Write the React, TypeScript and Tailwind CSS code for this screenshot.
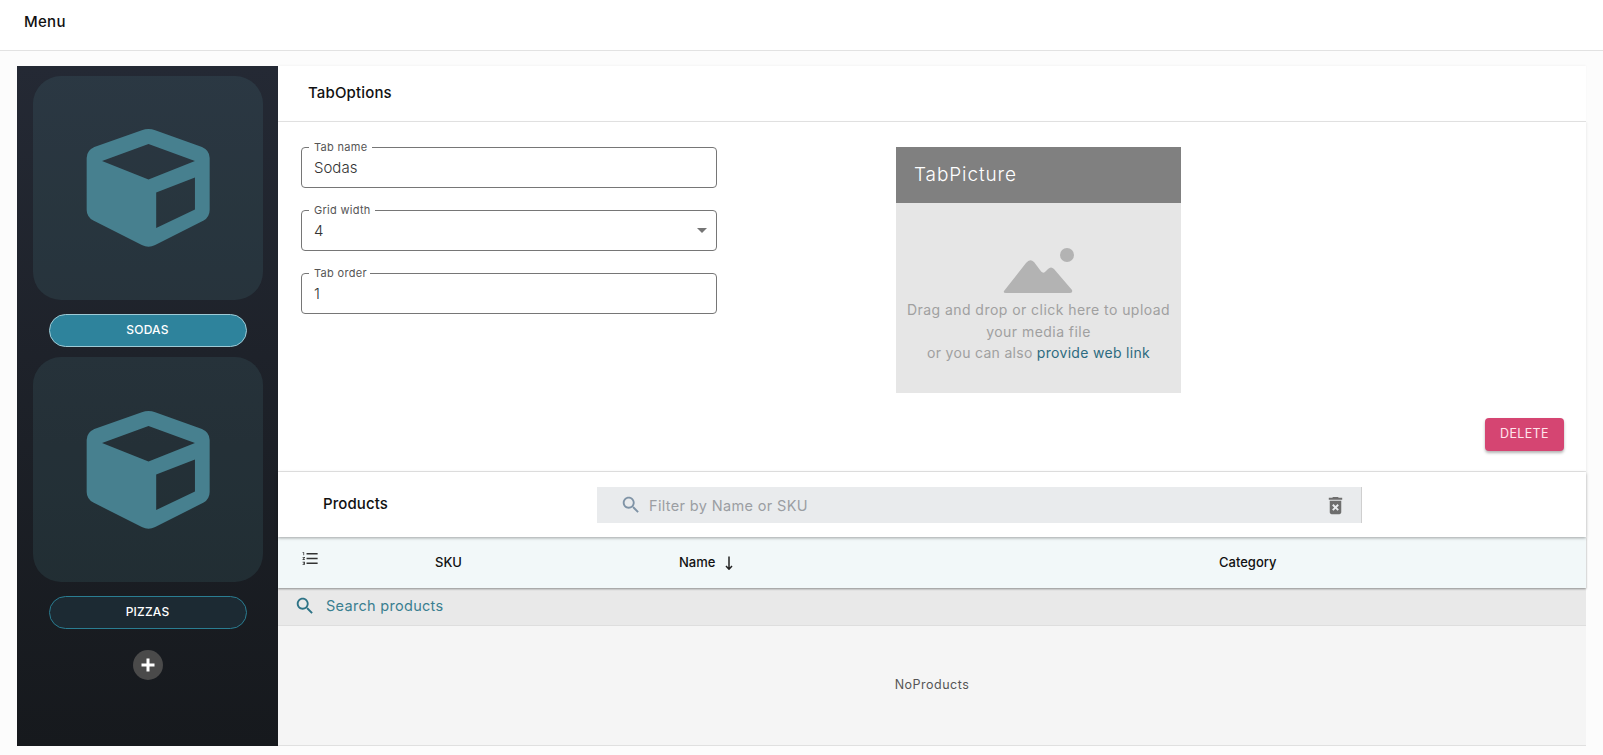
function Cube() {
  return (
    <svg viewBox="255 232 380 365" className="w-[127px] h-[122px]">
      <path
        fillRule="evenodd"
        fill="#47808f"
        d="M425 242 Q445 234 465 242 L605 292 Q628 302 628 325 L628 480 Q628 500 610 512 L465 585 Q445 595 425 585 L280 512 Q260 500 260 480 L260 325 Q260 302 283 292 Z M306 334 L445 389 L584 334 L445 283 Z M468 428 L468 534 L584 479 L584 383 Z"
      />
    </svg>
  );
}

function Tile({ heightClass }: { heightClass: string }) {
  return (
    <div className={`w-[230px] ${heightClass} rounded-[28px] bg-[#60a1ab]/[0.13] flex items-center justify-center pl-[2px]`}>
      <Cube />
    </div>
  );
}

function SearchIcon({ className }: { className: string }) {
  return (
    <svg viewBox="0 0 24 24" className={className} fill="currentColor">
      <path d="M15.5 14h-.79l-.28-.27C15.41 12.59 16 11.11 16 9.5 16 5.91 13.09 3 9.5 3S3 5.91 3 9.5 5.91 16 9.5 16c1.61 0 3.09-.59 4.23-1.57l.27.28v.79l5 4.99L20.49 19l-4.99-5zm-6 0C7.01 14 5 11.99 5 9.5S7.01 5 9.5 5 14 7.01 14 9.5 11.99 14 9.5 14z" />
    </svg>
  );
}

function Field({ label, value, labelWidth, select }: { label: string; value: string; labelWidth: string; select?: boolean }) {
  return (
    <div className="relative w-[416px] h-[41px] border border-[#767676] rounded-[4px] flex items-center pl-[12px] pr-[9px] justify-between">
      <span className={`absolute -top-[8px] left-[7px] h-[14px] px-[5px] bg-white text-[11px] leading-[14px] tracking-[0.3px] text-[#555] whitespace-nowrap ${labelWidth}`}>{label}</span>
      <span className="text-[15px] mt-[1px] font-[350] text-[#333]">{value}</span>
      {select && <span className="w-0 h-0 border-x-[5px] border-x-transparent border-t-[5px] border-t-[#757575]" />}
    </div>
  );
}

export default function App() {
  return (
    <div className="w-[1603px] h-[755px] overflow-hidden bg-[#fcfcfc] text-[#222] font-['Inter','Liberation_Sans',sans-serif]">
      <header className="h-[51px] bg-white border-b border-[#e2e2e2] pl-[24px] flex items-center">
        <span className="text-[15px] font-[450] tracking-[0.3px] text-[#111] mb-[5px]">Menu</span>
      </header>
      <div className="flex pl-[17px] pt-[15px] pr-[17px]">
        <aside className="w-[261px] h-[680px] shrink-0 bg-gradient-to-b from-[#242934] to-[#16191d] flex flex-col items-center pt-[10px]">
          <Tile heightClass="h-[224px]" />
          <button className="mt-[14px] w-[198px] h-[33px] pb-[2px] rounded-full bg-[#2e839c] border border-[#9fcbd6] text-white text-[12px] tracking-[0.2px] font-[450]">SODAS</button>
          <div className="mt-[10px]"><Tile heightClass="h-[225px]" /></div>
          <button className="mt-[14px] w-[198px] h-[33px] pb-[2px] rounded-full bg-[#1c2a33] border border-[#2a7d92] text-white text-[12px] tracking-[0.2px] font-[450]">PIZZAS</button>
          <div className="mt-[21px] w-[30px] h-[30px] rounded-full bg-[#4a4a4a] flex items-center justify-center">
            <svg viewBox="0 0 16 16" className="w-[16px] h-[16px]"><path d="M8 1.5v13M1.5 8h13" stroke="#fff" strokeWidth="3" /></svg>
          </div>
        </aside>
        <main className="flex-1 h-[680px] flex flex-col bg-white">
          <div className="h-[56px] border-b border-[#e4e4e4] pl-[30px] flex items-center shadow-[0_-1px_2px_rgba(0,0,0,0.03)]">
            <span className="text-[15px] font-[450] text-[#111] tracking-[0.15px]">TabOptions</span>
          </div>
          <div className="h-[350px] border-b border-[#eaeaea] relative flex pl-[23px] pt-[25px] shadow-[1px_0_2px_rgba(0,0,0,0.06)]">
            <div className="flex flex-col gap-[22px] w-[416px]">
              <Field label="Tab name" value="Sodas" labelWidth="w-[63px]" />
              <Field label="Grid width" value="4" labelWidth="w-[66px]" select />
              <Field label="Tab order" value="1" labelWidth="w-[61px]" />
            </div>
            <div className="ml-[179px] w-[285px] h-[246px] bg-[#e6e6e6] flex flex-col items-center">
              <div className="w-full h-[56px] shrink-0 bg-[#808080] pl-[18px] flex items-center text-white text-[19px] tracking-[0.9px] font-light">TabPicture</div>
              <svg viewBox="1000 248 77 46" className="w-[77px] h-[46px] mt-[45px] shrink-0">
                <circle cx="1067" cy="255" r="7" fill="#b3b3b3" />
                <path d="M1004 291 L1026 263 Q1030 258 1034 262 L1040 270 Q1043 275 1046 271 L1048 269 Q1051 266 1054 269 L1072 290 Q1073 293 1070 293 L1006 293 Q1003 293 1004 291 Z" fill="#b3b3b3" />
              </svg>
              <div className="mt-[5px] text-center text-[14px] leading-[21.5px] text-[#a0a0a0] tracking-[0.45px] w-full whitespace-nowrap">
                Drag and drop or click here to upload<br />your media file<br /><span className="tracking-[0.3px]">or you can also <span className="text-[#2d6b80]">provide web link</span></span>
              </div>
            </div>
            <button className="absolute right-[22px] top-[296px] w-[79px] h-[33px] pb-[1px] rounded-[4px] bg-[#d54572] text-[#ffe4ec] text-[12.5px] tracking-[0.35px] shadow-[0_2px_3px_rgba(0,0,0,0.3)]">DELETE</button>
          </div>
          <div className="h-[65px] flex items-center pl-[45px] shadow-[0_1px_3px_rgba(0,0,0,0.35)] z-10 bg-white">
            <span className="text-[15px] font-[450] tracking-[0.1px] text-[#111] w-[274px]">Products</span>
            <div className="w-[765px] h-[36px] bg-[#e9ebed] border-r border-[#cfcfcf] flex items-center pl-[23px] mt-[1px]">
              <SearchIcon className="w-[22px] h-[22px] text-[#7f93a6]" />
              <span className="ml-[7px] mt-[1px] text-[14.5px] text-[#9b9ea3] tracking-[0.35px]">Filter by Name or SKU</span>
              <svg viewBox="0 0 24 24" className="w-[23px] h-[23px] ml-auto mr-[14px]" fill="#6e6e6e">
                <path d="M6 19c0 1.1.9 2 2 2h8c1.1 0 2-.9 2-2V7H6v12zm2.46-7.12l1.41-1.41L12 12.59l2.12-2.12 1.41 1.41L13.41 14l2.12 2.12-1.41 1.41L12 15.41l-2.12 2.12-1.41-1.41L10.59 14l-2.13-2.12zM15.5 4l-1-1h-5l-1 1H5v2h14V4z" />
              </svg>
            </div>
          </div>
          <div className="h-[51px] bg-[#f2f8f9] grid grid-cols-[157px_244px_540px_1fr] items-center text-[13px] font-[450] text-[#111] shadow-[0_1px_2px_rgba(0,0,0,0.4)] z-[5]">
            <div className="pl-[23px] -mt-[8px]">
              <svg viewBox="0 0 24 24" className="w-[19px] h-[19px]" fill="#333">
                <path d="M2 17h2v.5H3v1h1v.5H2v1h3v-4H2zm1-9h1V4H2v1h1v3zm-1 3h1.8L2 13.1v.9h3v-1H3.2L5 10.9V10H2v1zm5-6v2h14V5H7zm0 14h14v-2H7v2zm0-6h14v-2H7v2z" />
              </svg>
            </div>
            <div>SKU</div>
            <div className="flex items-center gap-[9px]">Name
              <svg viewBox="0 0 10 14" className="w-[10px] h-[14px]" fill="none" stroke="#222" strokeWidth="1.5">
                <path d="M5 0.5V13M2 10l3 3.200L8 10" />
              </svg>
            </div>
            <div>Category</div>
          </div>
          <div className="h-[38px] bg-[#e9e9e9] border-b border-[#dedede] flex items-center pl-[16px] pb-[1px]">
            <SearchIcon className="w-[22px] h-[22px] text-[#2d7386]" />
            <span className="ml-[10px] text-[14.5px] text-[#3a7f90] tracking-[0.3px]">Search products</span>
          </div>
          <div className="flex-1 bg-[#f5f5f5] border-b border-[#e0e0e0] flex items-center justify-center text-[12.5px] text-[#555] tracking-[0.5px]">NoProducts</div>
        </main>
      </div>
    </div>
  );
}
